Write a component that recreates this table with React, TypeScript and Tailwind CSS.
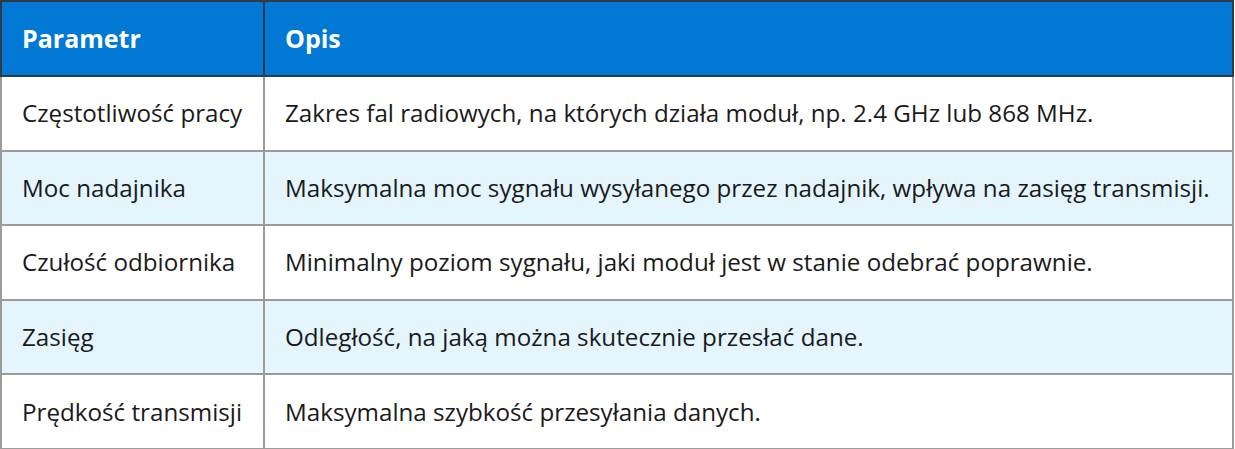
const rows = [
  ["Częstotliwość pracy", "Zakres fal radiowych, na których działa moduł, np. 2.4 GHz lub 868 MHz."],
  ["Moc nadajnika", "Maksymalna moc sygnału wysyłanego przez nadajnik, wpływa na zasięg transmisji."],
  ["Czułość odbiornika", "Minimalny poziom sygnału, jaki moduł jest w stanie odebrać poprawnie."],
  ["Zasięg", "Odległość, na jaką można skutecznie przesłać dane."],
  ["Prędkość transmisji", "Maksymalna szybkość przesyłania danych."],
];

export default function App() {
  return (
    <div className="w-[1235px] bg-white font-['Open_Sans',sans-serif]">
      <table className="w-[1234px] border-collapse border-2 border-[#9b9b9b] text-[24.2px] text-[#1a1a1a]">
        <thead>
          <tr className="h-[75px] bg-[#0078d4] text-left text-[25px] text-white">
            <th className="w-[263px] border-2 border-[#2f3a44] px-[20px] font-bold">Parametr</th>
            <th className="border-2 border-[#2f3a44] px-[20px] font-bold">Opis</th>
          </tr>
        </thead>
        <tbody>
          {rows.map(([name, desc], i) => (
            <tr key={name} className={i % 2 === 1 ? "h-[74.6px] bg-[#e4f5fe]" : "h-[74.6px] bg-white"}>
              <td className="border-2 border-[#9b9b9b] px-[20px]">{name}</td>
              <td className="border-2 border-[#9b9b9b] px-[20px]">{desc}</td>
            </tr>
          ))}
        </tbody>
      </table>
    </div>
  );
}
